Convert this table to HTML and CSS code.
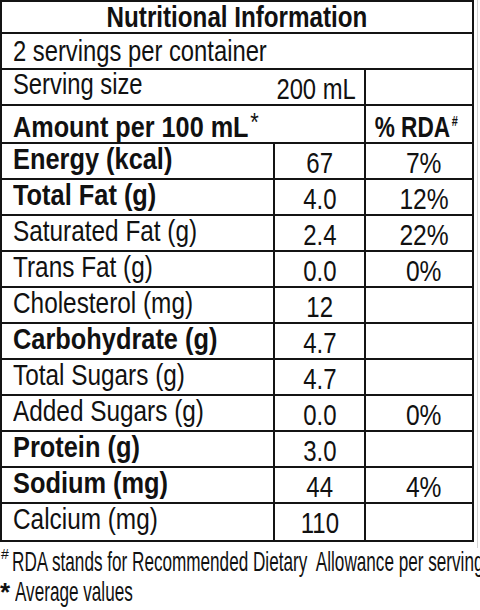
FILE: index.html
```html
<!DOCTYPE html>
<html lang="en">
<head>
<meta charset="utf-8">
<title>Nutritional Information</title>
<link rel="stylesheet" href="styles.css">
</head>
<body>
<div class="panel">
  <div class="grid">
    <div class="cell title span3 c"><span class="t h">Nutritional Information</span></div>
    <div class="cell servings span3"><span class="t h">2 servings per container</span></div>
    <div class="cell serving span2"><span class="t h">Serving size</span><span class="t h size">200 mL</span></div>
    <div class="cell"></div>
    <div class="cell amount b span2"><span class="t">Amount per 100 mL<sup class="ast">*</sup></span></div>
    <div class="cell amount b rda c"><span class="t">% RDA<sup class="hash">#</sup></span></div>

    <div class="cell lbl b"><span class="t">Energy (kcal)</span></div><div class="cell num c"><span class="t">67</span></div><div class="cell pct c"><span class="t">7%</span></div>
    <div class="cell lbl b"><span class="t">Total Fat (g)</span></div><div class="cell num c"><span class="t">4.0</span></div><div class="cell pct c"><span class="t">12%</span></div>
    <div class="cell lbl"><span class="t">Saturated Fat (g)</span></div><div class="cell num c"><span class="t">2.4</span></div><div class="cell pct c"><span class="t">22%</span></div>
    <div class="cell lbl"><span class="t">Trans Fat (g)</span></div><div class="cell num c"><span class="t">0.0</span></div><div class="cell pct c"><span class="t">0%</span></div>
    <div class="cell lbl"><span class="t">Cholesterol (mg)</span></div><div class="cell num c"><span class="t">12</span></div><div class="cell pct c"></div>
    <div class="cell lbl b"><span class="t">Carbohydrate (g)</span></div><div class="cell num c"><span class="t">4.7</span></div><div class="cell pct c"></div>
    <div class="cell lbl"><span class="t">Total Sugars (g)</span></div><div class="cell num c"><span class="t">4.7</span></div><div class="cell pct c"></div>
    <div class="cell lbl"><span class="t">Added Sugars (g)</span></div><div class="cell num c"><span class="t">0.0</span></div><div class="cell pct c"><span class="t">0%</span></div>
    <div class="cell lbl b"><span class="t">Protein (g)</span></div><div class="cell num c"><span class="t">3.0</span></div><div class="cell pct c"></div>
    <div class="cell lbl b"><span class="t">Sodium (mg)</span></div><div class="cell num c"><span class="t">44</span></div><div class="cell pct c"><span class="t">4%</span></div>
    <div class="cell lbl"><span class="t">Calcium (mg)</span></div><div class="cell num c"><span class="t">110</span></div><div class="cell pct c"></div>
  </div>
  <div class="notes">
    <div class="note"><span class="nhash">#</span><span class="squeeze">RDA stands for Recommended Dietary&nbsp; Allowance per serving</span></div>
    <div class="note"><span class="nast">*</span><span class="squeeze">Average values</span></div>
  </div>
</div>
</body>
</html>
```

FILE: styles.css
```css
html, body {
  margin: 0;
  padding: 0;
  background: #ffffff;
  overflow: hidden;
}

body {
  width: 480px;
  height: 610px;
  font-family: "Liberation Sans", Arial, sans-serif;
  color: #111111;
}

.panel {
  width: 480px;
  overflow: hidden;
  background: linear-gradient(to right, transparent 477px, #d4d4d4 477px, #d4d4d4 478px, transparent 478px) no-repeat 0 0 / 480px 548px;
}

.grid {
  width: 474px;
  box-sizing: border-box;
  display: grid;
  grid-template-columns: 271px 89px 106px;
  grid-template-rows: 30px 34px 34px 36px repeat(10, 34px) 36px;
  gap: 2px;
  padding: 2px;
  background: #141414;
}

.cell {
  background: #ffffff;
  display: flex;
  align-items: flex-start;
  font-size: 29px;
  line-height: 29px;
  white-space: nowrap;
  min-width: 0;
}

.c { justify-content: center; }
.span3 { grid-column: span 3; }
.span2 { grid-column: span 2; }
.b { font-weight: bold; }

/* condensed text: the label face is a narrow sans */
.t {
  display: inline-block;
  flex: none;
  transform: scaleX(0.84);
  transform-origin: left top;
}

.b .t { transform: scaleX(0.875); }
.t.h { transform: scaleX(0.82); }
.c .t { transform-origin: center top; }

.title {
  font-weight: bold;
  font-size: 29.5px;
}

.servings {
  padding: 3px 0 0 11px;
}

.serving {
  justify-content: space-between;
  padding: 0 8px 0 11px;
}

.serving .size {
  padding-top: 5px;
  transform-origin: right top;
}

.amount {
  padding-top: 7px;
  padding-left: 11px;
}

.amount .t { transform: scaleX(0.87); }

.rda {
  padding: 7px 6px 0 0;
}

.rda .t { transform: scaleX(0.78); }

.ast {
  font-size: 25px;
  line-height: 0;
  vertical-align: 6px;
  font-weight: normal;
  margin-left: 2px;
}

.hash {
  font-size: 14px;
  line-height: 0;
  vertical-align: 11px;
  margin-left: 2px;
}

.lbl {
  padding: 1px 0 0 11px;
}

.num {
  padding-top: 4px;
  font-size: 30px;
}

.num .t { transform: scaleX(0.8); }

.pct {
  padding: 4px 0 0 10px;
  font-size: 30px;
}

.pct .t { transform: scaleX(0.82); }

.notes {
  padding-top: 5px;
  width: 480px;
  overflow: hidden;
}

.note {
  display: flex;
  align-items: flex-start;
  white-space: nowrap;
  font-size: 28px;
  line-height: 30px;
  height: 30px;
}

.squeeze {
  display: inline-block;
  flex: none;
  transform: scaleX(0.612);
  transform-origin: left top;
}

.nhash {
  width: 12px;
  flex: none;
  font-size: 14px;
  line-height: 14px;
  padding-left: 1px;
  box-sizing: border-box;
}

.nast {
  width: 15px;
  flex: none;
  font-size: 26px;
  line-height: 30px;
  font-weight: bold;
}
```
